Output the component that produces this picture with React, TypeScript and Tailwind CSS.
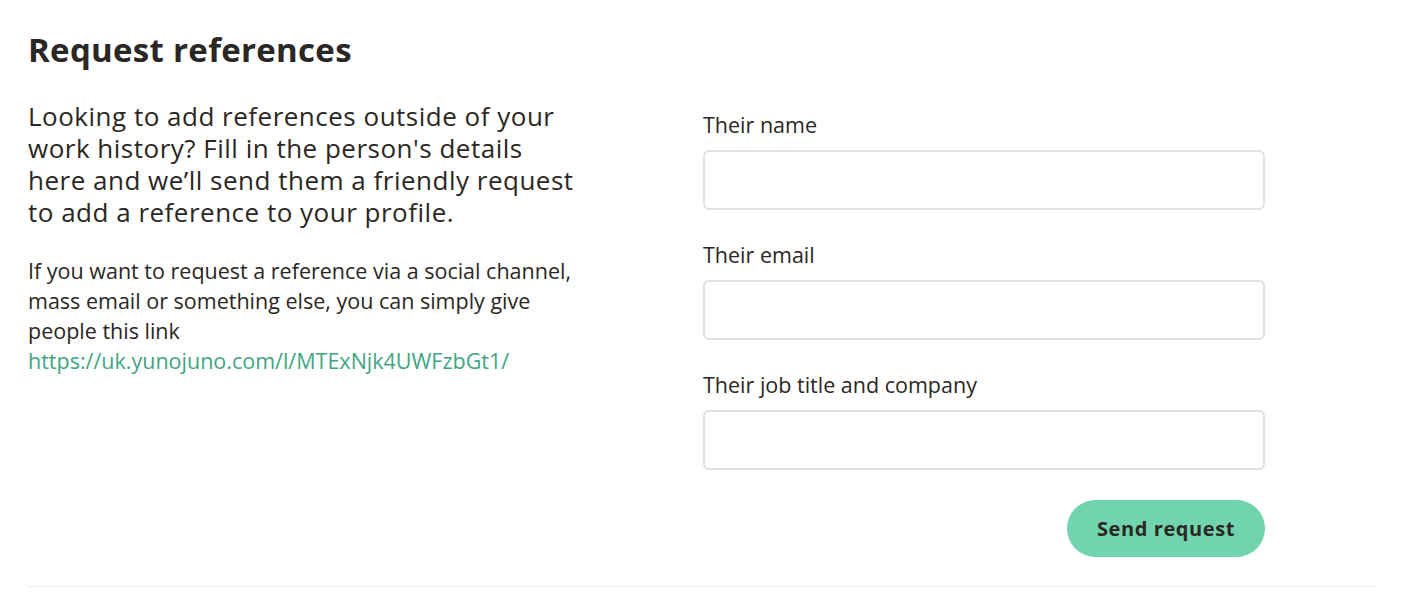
export default function App() {
  const fields = ['Their name', 'Their email', 'Their job title and company']

  return (
    <div className="min-h-[596px] w-full bg-white pl-[28px] pr-[24px] text-[#2a2724]" style={{ fontFamily: '"Open Sans", "Liberation Sans", sans-serif' }}>
      <h1 className="pt-[30px] text-[33px] font-bold leading-[40px] tracking-[0.3px]">Request references</h1>

      <div className="mt-[30px] grid grid-cols-2">
        <div className="max-w-[556px]">
          <p className="text-[26px] leading-[32px] tracking-[0.5px]">
            Looking to add references outside of your work history? Fill in the person's details here and we’ll send them a friendly request to add a reference to your profile.
          </p>
          <p className="mt-[28px] text-[21.5px] leading-[30px]">
            If you want to request a reference via a social channel, mass email or something else, you can simply give people this link{' '}
            <a href="#" className="text-[#3fa585]">https://uk.yunojuno.com/l/MTExNjk4UWFzbGt1/</a>
          </p>
        </div>

        <form className="flex w-[562px] flex-col pt-[13px]" onSubmit={(e) => e.preventDefault()}>
          {fields.map((label, i) => (
            <label key={label} className={i > 0 ? 'mt-[33px] block' : 'block'}>
              <span className="block text-[21.5px] leading-[24px]">{label}</span>
              <input type="text" className="mt-[13px] block h-[60px] w-full rounded-[6px] border-2 border-[#e0e0e0] bg-white px-3 text-[20px] outline-none" />
            </label>
          ))}
          <div className="mt-[30px] flex justify-end">
            <button type="submit" className="h-[57px] w-[198px] rounded-full bg-[#72d4ae] text-[20px] font-bold tracking-[0.6px] text-[#2a2724]">
              Send request
            </button>
          </div>
        </form>
      </div>

      <div className="mt-[29px] border-b border-[#ececec]" />
    </div>
  )
}
